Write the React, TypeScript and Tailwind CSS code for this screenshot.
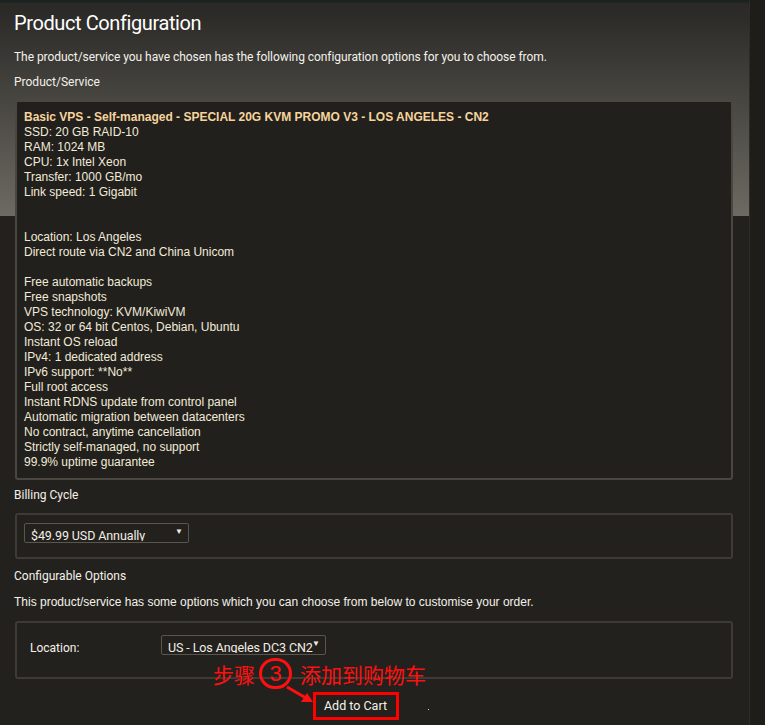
import React from "react";

const ubu = { fontFamily: "Roboto, 'Liberation Sans', sans-serif" };
const ari = { fontFamily: "'Liberation Sans', Arial, sans-serif" };
const cjk = { fontFamily: "'Noto Sans CJK SC', 'Noto Sans', sans-serif" };

const lines: string[] = [
  "SSD: 20 GB RAID-10",
  "RAM: 1024 MB",
  "CPU: 1x Intel Xeon",
  "Transfer: 1000 GB/mo",
  "Link speed: 1 Gigabit",
  "",
  "",
  "Location: Los Angeles",
  "Direct route via CN2 and China Unicom",
  "",
  "Free automatic backups",
  "Free snapshots",
  "VPS technology: KVM/KiwiVM",
  "OS: 32 or 64 bit Centos, Debian, Ubuntu",
  "Instant OS reload",
  "IPv4: 1 dedicated address",
  "IPv6 support: **No**",
  "Full root access",
  "Instant RDNS update from control panel",
  "Automatic migration between datacenters",
  "No contract, anytime cancellation",
  "Strictly self-managed, no support",
  "99.9% uptime guarantee",
];

function FakeSelect({ text, width }: { text: string; width: string }) {
  return (
    <div
      className={`relative h-[20px] ${width} rounded-[2px] border border-[#5a554d] bg-[#23211d] overflow-hidden`}
    >
      <div
        className="absolute left-[6px] top-[2px] bottom-[1px] right-[12px] whitespace-nowrap overflow-hidden text-[12.5px] leading-[20px] tracking-[-0.1px] text-[#f2eee6]"
        style={ubu}
      >
        {text}
      </div>
      <div className="absolute right-[5px] top-[3px] text-[8px] leading-[8px] text-[#f2eee6]">▼</div>
    </div>
  );
}

export default function App() {
  return (
    <div className="w-[765px] h-[725px] overflow-hidden flex bg-[#23211d]">
      <div className="relative w-[749px] h-full bg-[#23211d] bg-[linear-gradient(to_bottom,#1b2320_0px,#1b2320_2px,#2a2926_3px,#2d2c29_18px,#6c6a62_216px)] bg-no-repeat bg-[length:100%_216px]">
        <div className="pl-[14px] pr-[16px]">
          <h1 className="pt-[11px] text-[20px] leading-[24px] text-white tracking-[-0.4px]" style={ubu}>
            Product Configuration
          </h1>
          <p className="mt-[15px] text-[12px] leading-[14px] tracking-[-0.05px] text-[#f4f1ea]" style={ubu}>
            The product/service you have chosen has the following configuration options for you to choose from.
          </p>
          <p className="mt-[11px] text-[12px] leading-[14px] text-[#f4f1ea]" style={ubu}>
            Product/Service
          </p>
          <div
            className="ml-px mt-[11px] w-[718px] rounded-[3px] border-2 border-[#4a4640] bg-[#22201d] pl-[7px] pt-[8px] pb-[8px] text-[12px] leading-[15px] text-[#f1ebd8]"
            style={ari}
          >
            <div className="font-bold text-[#f6d49c]">
              Basic VPS - Self-managed - SPECIAL 20G KVM PROMO V3 - LOS ANGELES - CN2
            </div>
            {lines.map((l, i) => (
              <div key={i} className="h-[15px] whitespace-nowrap">
                {l}
              </div>
            ))}
          </div>
          <p className="mt-[8px] text-[12px] leading-[14px] text-[#f4f1ea]" style={ubu}>
            Billing Cycle
          </p>
          <div className="ml-px mt-[11px] w-[718px] h-[46px] rounded-[3px] border-2 border-[#3e3a35] pl-[7px] pt-[8px]">
            <FakeSelect text="$49.99 USD Annually" width="w-[165px]" />
          </div>
          <p className="mt-[10px] text-[12px] leading-[14px] text-[#f4f1ea]" style={ubu}>
            Configurable Options
          </p>
          <p className="mt-[12px] text-[12px] leading-[14px] text-[#f4f1ea]" style={ari}>
            This product/service has some options which you can choose from below to customise your order.
          </p>
          <div className="ml-px mt-[12px] w-[718px] h-[58px] rounded-[3px] border-2 border-[#3e3a35] flex items-start pl-[13px] pt-[12px]">
            <div className="w-[131px] mt-[6px] text-[12px] leading-[14px] text-[#f4f1ea]" style={ubu}>
              Location:
            </div>
            <FakeSelect text="US - Los Angeles DC3 CN2" width="w-[165px]" />
          </div>
          <div className="mt-[13px] flex justify-center">
            <div className="relative ml-[-36px] w-[86px] h-[28px] border-[3px] border-[#ff0000] flex items-center justify-center">
              <span className="text-[12.5px] leading-[14px] text-[#f4f1ea]" style={ubu}>
                Add to Cart
              </span>
            </div>
          </div>
        </div>

        {/* annotation */}
        <div className="absolute left-[213px] top-[658px] flex items-center text-[#ff1010]" style={cjk}>
          <span className="text-[21px] leading-[26px]">步骤</span>
          <span
            className="ml-[4px] w-[33px] h-[31px] rounded-full border-[3px] border-[#ff1010] flex items-center justify-center text-[22px] leading-[22px]"
            style={ari}
          >
            3
          </span>
          <span className="ml-[8px] text-[21px] leading-[26px]">添加到购物车</span>
        </div>
        <svg className="absolute left-[284px] top-[684px]" width="32" height="22" viewBox="0 0 32 22">
          <line x1="3" y1="3" x2="22" y2="14" stroke="#ff1010" strokeWidth="3" />
          <polygon points="29,18 17,18 23,9" fill="#ff1010" />
        </svg>
        <div className="absolute left-[428px] top-[709px] w-[1px] h-[1px] bg-[#d8d4cc]" />
      </div>
      <div className="w-[16px] h-full bg-[#1f1d1a] border-l border-[#2e2c28]" />
    </div>
  );
}
